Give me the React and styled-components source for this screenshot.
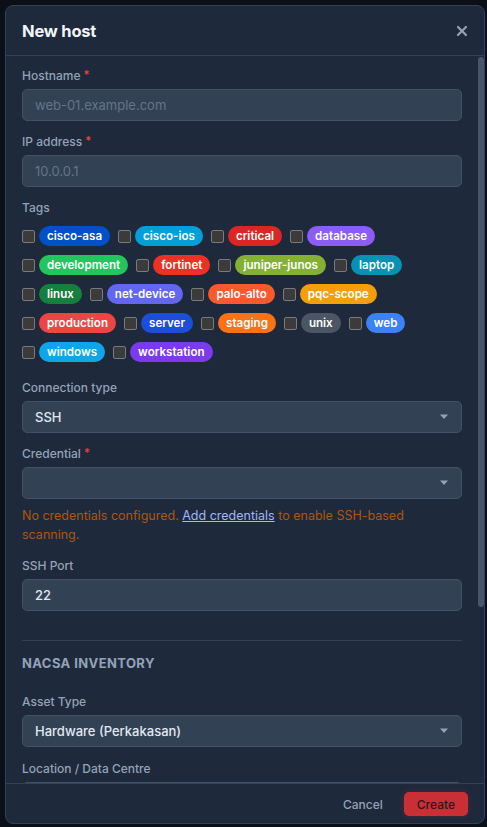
import styled, { createGlobalStyle } from "styled-components";

const GlobalStyle = createGlobalStyle`
  html, body {
    margin: 0;
    padding: 0;
    background: #0b0f17;
  }
  body {
    font-family: Inter, "Noto Sans", sans-serif;
  }
  * {
    box-sizing: border-box;
  }
`;

const Page = styled.div`
  padding: 5px 2px 4px 5px;
  height: 827px;
`;

const Modal = styled.div`
  width: 480px;
  height: 819px;
  display: flex;
  flex-direction: column;
  background: #1e293b;
  border: 1px solid #334155;
  border-radius: 8px;
  overflow: hidden;
`;

const Header = styled.div`
  height: 50px;
  flex-shrink: 0;
  display: flex;
  align-items: center;
  justify-content: space-between;
  padding: 0 16px;
  border-bottom: 1px solid #334155;
`;

const Title = styled.h2`
  margin: 0;
  font-size: 16.5px;
  font-weight: 700;
  color: #f1f5f9;
  letter-spacing: -0.2px;
`;

const CloseButton = styled.button`
  border: none;
  background: none;
  padding: 0;
  display: flex;
  color: #94a3b8;
  cursor: pointer;
`;

const Body = styled.div`
  flex: 1;
  min-height: 0;
  display: flex;
  overflow: hidden;
`;

const Content = styled.div`
  flex: 1;
  min-width: 0;
  overflow: hidden;
  padding: 11px 16px 0 16px;
`;

const ScrollTrack = styled.div`
  width: 6px;
  flex-shrink: 0;
  padding-top: 1px;
`;

const ScrollThumb = styled.div`
  height: 550px;
  background: #475569;
  border-radius: 3px;
`;

const Field = styled.div`
  margin-bottom: ${(p) => p.$mb ?? 12}px;
`;

const Label = styled.label`
  display: block;
  font-size: 12px;
  line-height: 17px;
  font-weight: 500;
  color: #94a3b8;
  margin-bottom: ${(p) => p.$mb ?? 5}px;
`;

const Required = styled.span`
  color: #ef4444;
  margin-left: 3px;
  font-size: 11.5px;
  vertical-align: 1px;
`;

const Input = styled.input`
  display: block;
  width: 100%;
  height: 32px;
  padding: 0 12px;
  background: #334155;
  border: 1px solid #435168;
  border-radius: 5px;
  color: #e2e8f0;
  font-family: inherit;
  font-size: 13px;
  font-weight: 500;
  outline: none;

  &::placeholder {
    color: #64748b;
    font-weight: 400;
  }
`;

const SelectBox = styled.div`
  height: 32px;
  display: flex;
  align-items: center;
  justify-content: space-between;
  padding: 0 12px;
  background: #334155;
  border: 1px solid #435168;
  border-radius: 5px;
  color: #e2e8f0;
  font-size: 13px;
  font-weight: 500;
`;

const Caret = styled.svg`
  flex-shrink: 0;
  color: #94a3b8;
`;

const TagList = styled.div`
  display: flex;
  flex-wrap: wrap;
  row-gap: 9px;
  column-gap: 8px;
  margin-top: 10px;
`;

const TagOption = styled.label`
  display: flex;
  align-items: center;
  gap: 4px;
  cursor: pointer;
`;

const Checkbox = styled.input`
  appearance: none;
  margin: 0;
  width: 13px;
  height: 13px;
  background: #3b3b3b;
  border: 1px solid #7a7a7a;
  border-radius: 2px;
`;

const Pill = styled.span`
  display: inline-flex;
  align-items: center;
  height: 20px;
  padding: 0 8px;
  border-radius: 10px;
  background: ${(p) => p.$color};
  color: #fff;
  font-size: 11.6px;
  font-weight: 600;
`;

const Hint = styled.p`
  margin: 7px 0 0;
  font-size: 12.5px;
  line-height: 19px;
  color: #b0560f;
`;

const HintLink = styled.a`
  color: #a5b4fc;
  text-decoration: underline;
`;

const Section = styled.div`
  margin-top: 29px;
  border-top: 1px solid #334155;
  padding-top: 14px;
`;

const SectionTitle = styled.h3`
  margin: 0 0 22px;
  font-size: 13px;
  line-height: 16px;
  font-weight: 700;
  letter-spacing: 0.4px;
  text-transform: uppercase;
  color: #94a3b8;
`;

const Footer = styled.div`
  flex-shrink: 0;
  display: flex;
  justify-content: flex-end;
  align-items: center;
  gap: 9px;
  padding: 8px 16px 7px;
  border-top: 1px solid #334155;
`;

const Button = styled.button`
  height: 24px;
  padding: 0 ${(p) => (p.$primary ? 13 : 12)}px;
  border: none;
  border-radius: 5px;
  font-family: inherit;
  font-size: 12px;
  font-weight: 500;
  cursor: pointer;
  background: ${(p) => (p.$primary ? "#c92f35" : "transparent")};
  color: ${(p) => (p.$primary ? "#2d1622" : "#94a3b8")};
  box-shadow: ${(p) => (p.$primary ? "0 0 6px rgba(201, 47, 53, 0.25)" : "none")};
`;

const tags = [
  ["cisco-asa", "#0050c8"],
  ["cisco-ios", "#049fd9"],
  ["critical", "#dc2626"],
  ["database", "#8b5cf6"],
  ["development", "#22c55e"],
  ["fortinet", "#ee3124"],
  ["juniper-junos", "#84b135"],
  ["laptop", "#0891b2"],
  ["linux", "#15803d"],
  ["net-device", "#6366f1"],
  ["palo-alto", "#fa582d"],
  ["pqc-scope", "#f59e0b"],
  ["production", "#ef4444"],
  ["server", "#1d4ed8"],
  ["staging", "#f97316"],
  ["unix", "#4b5563"],
  ["web", "#3b82f6"],
  ["windows", "#0ea5e9"],
  ["workstation", "#7c3aed"],
];

function Select({ value }) {
  return (
    <SelectBox>
      <span>{value}</span>
      <Caret width="10" height="6" viewBox="0 0 10 6">
        <path d="M1 0.5h8L5 5z" fill="currentColor" />
      </Caret>
    </SelectBox>
  );
}

export default function App() {
  return (
    <Page>
      <GlobalStyle />
      <Modal>
        <Header>
          <Title>New host</Title>
          <CloseButton aria-label="Close">
            <svg width="12" height="12" viewBox="0 0 12 12">
              <path
                d="M2 2l8 8M10 2l-8 8"
                stroke="currentColor"
                strokeWidth="2.2"
                strokeLinecap="round"
              />
            </svg>
          </CloseButton>
        </Header>

        <Body>
          <Content>
            <Field>
              <Label>
                Hostname<Required>*</Required>
              </Label>
              <Input placeholder="web-01.example.com" />
            </Field>

            <Field>
              <Label>
                IP address<Required>*</Required>
              </Label>
              <Input placeholder="10.0.0.1" />
            </Field>

            <Field $mb={17}>
              <Label $mb={0}>Tags</Label>
              <TagList>
                {tags.map(([name, color]) => (
                  <TagOption key={name}>
                    <Checkbox type="checkbox" />
                    <Pill $color={color}>{name}</Pill>
                  </TagOption>
                ))}
              </TagList>
            </Field>

            <Field>
              <Label>Connection type</Label>
              <Select value="SSH" />
            </Field>

            <Field $mb={13}>
              <Label>
                Credential<Required>*</Required>
              </Label>
              <Select value="" />
              <Hint>
                No credentials configured. <HintLink href="#">Add credentials</HintLink>{" "}
                to enable SSH-based scanning.
              </Hint>
            </Field>

            <Field $mb={0}>
              <Label>SSH Port</Label>
              <Input defaultValue="22" />
            </Field>

            <Section>
              <SectionTitle>NACSA Inventory</SectionTitle>

              <Field $mb={13}>
                <Label>Asset Type</Label>
                <Select value="Hardware (Perkakasan)" />
              </Field>

              <Field>
                <Label>Location / Data Centre</Label>
                <Input />
              </Field>
            </Section>
          </Content>
          <ScrollTrack>
            <ScrollThumb />
          </ScrollTrack>
        </Body>

        <Footer>
          <Button>Cancel</Button>
          <Button $primary>Create</Button>
        </Footer>
      </Modal>
    </Page>
  );
}
